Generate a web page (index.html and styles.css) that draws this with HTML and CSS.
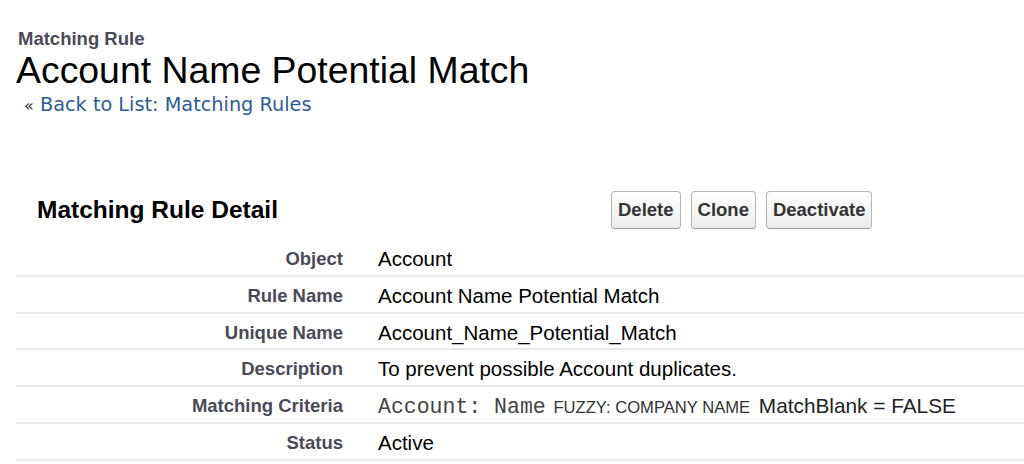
FILE: index.html
```html
<!DOCTYPE html>
<html lang="en">
<head>
<meta charset="utf-8">
<title>Matching Rule: Account Name Potential Match</title>
<link rel="stylesheet" href="styles.css">
</head>
<body>
<div class="page">
  <header class="pt-header">
    <div class="pt-type">Matching Rule</div>
    <h1 class="pt-title">Account Name Potential Match</h1>
    <div class="pt-breadcrumb"><span class="raquo">«</span> <a href="#" class="pt-link">Back to List: Matching Rules</a></div>
  </header>

  <section class="detail">
    <div class="detail-head">
      <h2 class="detail-title">Matching Rule Detail</h2>
      <div class="detail-buttons">
        <button class="btn" type="button">Delete</button>
        <button class="btn" type="button">Clone</button>
        <button class="btn" type="button">Deactivate</button>
      </div>
    </div>

    <div class="detail-list">
      <div class="row">
        <div class="label">Object</div>
        <div class="value">Account</div>
      </div>
      <div class="row">
        <div class="label">Rule Name</div>
        <div class="value">Account Name Potential Match</div>
      </div>
      <div class="row">
        <div class="label">Unique Name</div>
        <div class="value">Account_Name_Potential_Match</div>
      </div>
      <div class="row">
        <div class="label">Description</div>
        <div class="value">To prevent possible Account duplicates.</div>
      </div>
      <div class="row">
        <div class="label">Matching Criteria</div>
        <div class="value"><span class="crit-field">Account: Name</span> <span class="crit-method">FUZZY: COMPANY NAME</span> <span class="crit-blank">MatchBlank = FALSE</span></div>
      </div>
      <div class="row">
        <div class="label">Status</div>
        <div class="value">Active</div>
      </div>
    </div>
  </section>
</div>
</body>
</html>
```

FILE: styles.css
```css
html, body {
  margin: 0;
  padding: 0;
  background: #ffffff;
}

body {
  font-family: "Liberation Sans", Arial, Helvetica, sans-serif;
  color: #000;
  overflow: hidden;
}

.page {
  padding: 28px 0 0 16px;
}

/* page title block */
.pt-header {
  padding-left: 2px;
}

.pt-type {
  font-size: 18.5px;
  font-weight: bold;
  color: #4a4a56;
  line-height: 22px;
}

.pt-title {
  margin: 0;
  font-size: 37.4px;
  font-weight: normal;
  line-height: 40px;
  margin-left: -2px;
}

.pt-breadcrumb {
  margin-top: 3px;
  padding-left: 6px;
  font-family: "DejaVu Sans", Verdana, sans-serif;
  font-size: 19.3px;
  line-height: 24px;
  color: #333;
}

.raquo {
  font-size: 16px;
}

.pt-link {
  color: #2c5d98;
  text-decoration: none;
}

/* detail block */
.detail {
  margin-top: 72px;
}

.detail-head {
  display: grid;
  grid-template-columns: 595px auto;
  align-items: center;
  height: 40px;
}

.detail-title {
  margin: 0;
  padding-left: 21px;
  font-size: 24.5px;
  font-weight: bold;
  color: #000;
}

.detail-buttons {
  display: flex;
  gap: 10px;
}

.btn {
  height: 38px;
  padding: 0 6px;
  font-family: "Liberation Sans", Arial, Helvetica, sans-serif;
  font-size: 18.5px;
  font-weight: bold;
  color: #333;
  background: linear-gradient(#ffffff, #ececec);
  border: 1px solid #b4b4b4;
  border-bottom-color: #9a9a9a;
  border-radius: 4px;
}

.detail-list {
  margin-top: 10px;
}

.row {
  display: grid;
  grid-template-columns: 327px 1fr;
  column-gap: 35px;
  height: 34.8px;
  border-bottom: 2px solid #e8e8ea;
}

.label {
  text-align: right;
  font-size: 18.5px;
  font-weight: bold;
  color: #4a4a56;
  padding-top: 8px;
}

.value {
  font-size: 20.5px;
  color: #000;
  white-space: nowrap;
  padding-top: 7px;
}

.crit-field {
  font-family: "Liberation Mono", "Courier New", monospace;
  font-size: 21.5px;
  color: #444;
}

.crit-method {
  font-size: 16.6px;
  color: #333;
  margin-left: 2px;
}

.crit-blank {
  color: #222;
  font-size: 20.8px;
  margin-left: 3px;
}
```
